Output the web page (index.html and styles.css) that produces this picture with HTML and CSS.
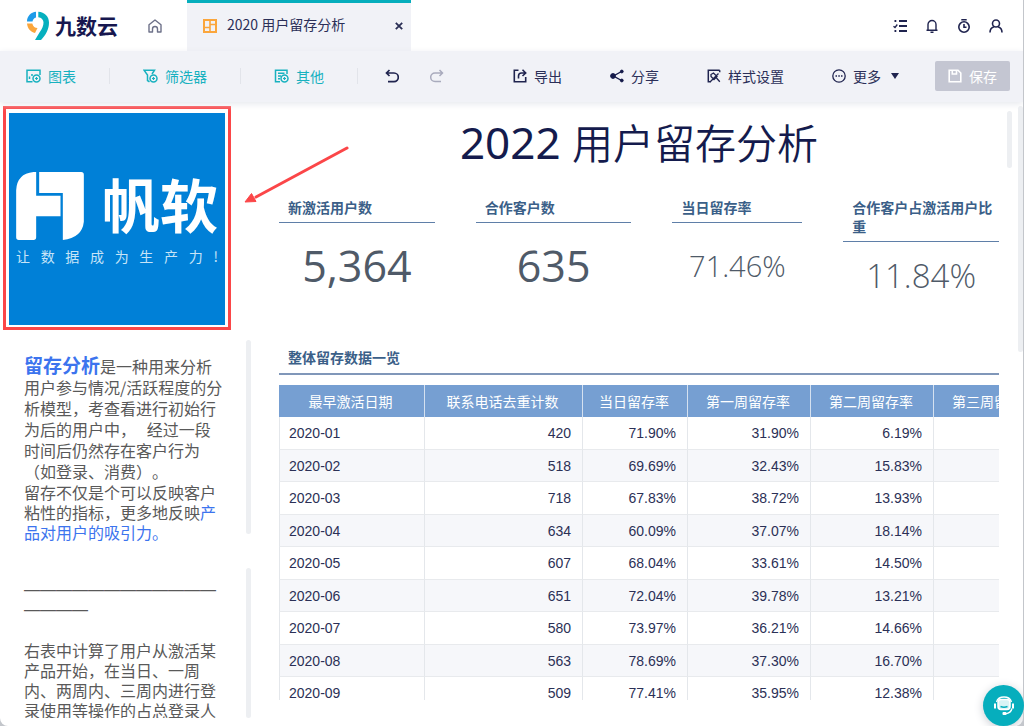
FILE: index.html
```html
<!DOCTYPE html>
<html lang="zh-CN">
<head>
<meta charset="utf-8">
<title>2020 用户留存分析</title>
<link rel="stylesheet" href="styles.css">
</head>
<body>
<div class="app">
  <header class="topbar">
    <a class="brand" href="#">
      <svg width="24" height="30" viewBox="0 0 24 30" fill="none">
        <path d="M1 10.500C1 5 5 1.200 10 .700V6.500C8 7 7 8.500 6.500 10.500Z" fill="#1e9be9"/>
        <path d="M1 12.500H6.300C7 15.500 9 17 11.500 17L9 22C4.500 21 1.500 17.500 1 12.500Z" fill="#fba63c"/>
        <path d="M12.300 .700C18.500 1 23 5.500 23 11.500C23 18 20 24 15 29H9L13.500 21.500C16.300 17.500 17.500 14.500 17.500 11.500C17.500 8.700 15.300 6.700 12.300 6.300Z" fill="#06b0be"/>
      </svg>
      <span class="brand-name">九数云</span>
    </a>
    <a class="home" href="#" aria-label="首页">
      <svg width="14" height="14" viewBox="0 0 14 14" fill="none" stroke="#6d7189" stroke-width="1.400"><path d="M1 5.800 7 1l6 4.800V13H9.500V10a2.500 2.500 0 0 0-5 0v3H1Z" stroke-linejoin="round"/></svg>
    </a>
    <div class="tab">
      <svg width="14" height="14" viewBox="0 0 14 14" fill="none" stroke="#fba63c" stroke-width="2"><rect x="1" y="1" width="12" height="12"/><path d="M7 1v12M1 8.500h6M7 5.500h6" stroke-width="1.600"/></svg>
      <span class="tab-title">2020 用户留存分析</span>
      <button class="tab-close" aria-label="关闭"><svg width="8" height="8" viewBox="0 0 8 8" stroke="#2b2f55" stroke-width="1.800"><path d="M.8.8l6.400 6.400M7.200.8.8 7.200"/></svg></button>
    </div>
    <nav class="tools">
      <button aria-label="任务"><svg width="14" height="14" viewBox="0 0 14 14" fill="none" stroke="#20244f" stroke-width="1.800"><path d="M6 2h8M6 7h8M6 12h8M1.500 2h1.800M1.500 12h1.800"/><path d="M.5 7.200 2 8.500 4.300 5.500" stroke-width="1.300"/></svg></button>
      <button aria-label="通知"><svg width="14" height="14" viewBox="0 0 14 14" fill="none" stroke="#20244f" stroke-width="1.400"><path d="M3 11V5.500a4 4 0 0 1 8 0V11M1.500 11.200h11M5.500 13.300h3"/></svg></button>
      <button aria-label="定时"><svg width="14" height="14" viewBox="0 0 14 14" fill="none" stroke="#20244f" stroke-width="1.600"><circle cx="7" cy="8" r="5.200"/><path d="M4.300 .8h5.400M7 5v3.300h2.500"/></svg></button>
      <button aria-label="账户"><svg width="14" height="14" viewBox="0 0 14 14" fill="none" stroke="#20244f" stroke-width="1.600"><circle cx="7" cy="4.500" r="3.500"/><path d="M1 13.500C1 10.500 2.500 8.500 5 7.700M13 13.500C13 10.500 11.500 8.500 9 7.700"/></svg></button>
    </nav>
  </header>

  <div class="toolbar">
    <div class="group inserts">
      <button class="tool accent"><svg width="15" height="14" viewBox="0 0 15 14" fill="none" stroke="#18b1bf" stroke-width="1.500"><path d="M6.500 12.800H1V1.200h13V6M3.500 10V7.500M6 5v2"/><circle cx="10.500" cy="9.500" r="3.500"/><path d="M10.500 8v3M9 9.500h3" stroke-width="1.200"/></svg>图表</button>
      <i class="sep"></i>
      <button class="tool accent"><svg width="15" height="14" viewBox="0 0 15 14" fill="none" stroke="#18b1bf" stroke-width="1.500"><path d="M6.500 12.800 4.500 11.500V6L1 1.200h10.500L9 5"/><circle cx="10.500" cy="9.500" r="3.500"/><path d="M10.500 8v3M9 9.500h3" stroke-width="1.200"/></svg>筛选器</button>
      <i class="sep"></i>
      <button class="tool accent"><svg width="15" height="14" viewBox="0 0 15 14" fill="none" stroke="#18b1bf" stroke-width="1.500"><path d="M6 12.800H1.500V1.200H13V5M4 4.200h6.500M4 7h3M4 9.800h2"/><circle cx="10.500" cy="9.500" r="3.500"/><path d="M10.500 8v3M9 9.500h3" stroke-width="1.200"/></svg>其他</button>
      <i class="sep"></i>
    </div>
    <div class="group history">
      <button class="tool" aria-label="撤销"><svg width="14" height="14" viewBox="0 0 14 14" fill="none" stroke="#20244f" stroke-width="1.700"><path d="M4.500 1 1.500 4l3 3M1.500 4H9a4.200 4.200 0 0 1 0 8.600H3"/></svg></button>
      <button class="tool" aria-label="重做" disabled><svg width="14" height="14" viewBox="0 0 14 14" fill="none" stroke="#a9abbd" stroke-width="1.500"><path d="M9.500 1l3 3-3 3M12.500 4H5a4.200 4.200 0 0 0 0 8.600h6"/></svg></button>
    </div>
    <div class="group actions">
      <button class="tool"><svg width="14" height="14" viewBox="0 0 14 14" fill="none" stroke="#20244f" stroke-width="1.600"><path d="M5.500 1.300H1.300v11.400h11.400V8"/><path d="M5.500 9.500V7A3 3 0 0 1 8.500 4H12M9.500 .8 12.700 4 9.500 7"/></svg>导出</button>
      <button class="tool"><svg width="14" height="14" viewBox="0 0 14 14" fill="#151a4a" stroke="#151a4a"><path d="M11.500 2.500 3.500 7l8 4.500" fill="none" stroke-width="1.400"/><circle cx="3" cy="7" r="2.400"/><circle cx="11.800" cy="2.500" r="1.400"/><circle cx="11.800" cy="11.500" r="1.400"/></svg>分享</button>
      <button class="tool"><svg width="14" height="14" viewBox="0 0 14 14" fill="none" stroke="#20244f" stroke-width="1.500"><path d="M4 12.700H1.300V1.300h11.400M12.700 1.300v2"/><path d="M4 5.500 6.500 4 10 7.500 7 10.500 4 7.500ZM3.500 12.500 11.500 4.500M9.500 9l3.300 3.800" stroke-width="1.300"/></svg>样式设置</button>
      <button class="tool"><svg width="14" height="14" viewBox="0 0 14 14" fill="none" stroke="#20244f" stroke-width="1.300"><circle cx="7" cy="7" r="6.200"/><path d="M3.500 7H5M6.300 7h1.500M9 7h1.500" stroke-width="1.500"/></svg>更多<svg class="caret" width="8" height="6" viewBox="0 0 8 6"><path d="M0 0h8L4 6Z" fill="#20244f"/></svg></button>
    </div>
    <button class="save"><svg width="14" height="14" viewBox="0 0 14 14" fill="none" stroke="#fff" stroke-width="1.600"><path d="M1.200 1.200H10L12.800 4v8.800H1.200ZM4.300 1.200V5H8.500V1.200"/></svg>保存</button>
  </div>

  <main class="board">
    <aside class="side">
      <figure class="picture">
        <div class="poster">
          <div class="poster-logo">
            <svg width="68" height="68" viewBox="50 217 203 204" fill="#fff"><path d="M110 217V288H183V350H110V413Q110 421 102 421H58Q50 421 50 413V272Q52 222 102 217Z"/><path d="M119 217H245Q253 217 253 225V366Q248 414 190 421V280H119Z"/></svg>
            <span class="poster-name">帆软</span>
          </div>
          <div class="poster-line"><span>让</span><span>数</span><span>据</span><span>成</span><span>为</span><span>生</span><span>产</span><span>力</span><span>!</span></div>
        </div>
      </figure>
      <section class="note note-intro">
        <div class="note-text">
          <p><strong>留存分析</strong>是一种用来分析用户参与情况/活跃程度的分析模型，考查看进行初始行为后的用户中，&nbsp;&nbsp; 经过一段时间后仍然存在客户行为（如登录、消费）。</p>
          <p class="tight">留存不仅是个可以反映客户粘性的指标，更多地反映<em>产品对用户的吸引力。</em></p>
        </div>
        <i class="thumb"></i>
      </section>
      <section class="note note-detail">
        <div class="note-text">
          <p class="tight rule">————————————————</p>
          <p class="tight">右表中计算了用户从激活某产品开始，在当日、一周内、两周内、三周内进行登录使用等操作的占总登录人</p>
        </div>
        <i class="thumb"></i>
      </section>
    </aside>

    <div class="report">
      <h1><span class="year">2022 </span>用户留存分析</h1>
      <div class="kpis">
        <section class="kpi"><h2>新激活用户数</h2><div class="value big">5,364</div></section>
        <section class="kpi"><h2>合作客户数</h2><div class="value big">635</div></section>
        <section class="kpi"><h2>当日留存率</h2><div class="value small">71.46%</div></section>
        <section class="kpi"><h2>合作客户占激活用户比重</h2><div class="value medium">11.84%</div></section>
      </div>
      <h2 class="table-title">整体留存数据一览</h2>
      <div class="table-view">
        <table>
          <colgroup><col class="c-date"><col class="c-count"><col class="c-day"><col class="c-week"><col class="c-week"><col class="c-week"></colgroup>
          <thead><tr><th>最早激活日期</th><th>联系电话去重计数</th><th>当日留存率</th><th>第一周留存率</th><th>第二周留存率</th><th>第三周留存率</th></tr></thead>
          <tbody>
            <tr><td>2020-01</td><td>420</td><td>71.90%</td><td>31.90%</td><td>6.19%</td><td></td></tr>
            <tr><td>2020-02</td><td>518</td><td>69.69%</td><td>32.43%</td><td>15.83%</td><td></td></tr>
            <tr><td>2020-03</td><td>718</td><td>67.83%</td><td>38.72%</td><td>13.93%</td><td></td></tr>
            <tr><td>2020-04</td><td>634</td><td>60.09%</td><td>37.07%</td><td>18.14%</td><td></td></tr>
            <tr><td>2020-05</td><td>607</td><td>68.04%</td><td>33.61%</td><td>14.50%</td><td></td></tr>
            <tr><td>2020-06</td><td>651</td><td>72.04%</td><td>39.78%</td><td>13.21%</td><td></td></tr>
            <tr><td>2020-07</td><td>580</td><td>73.97%</td><td>36.21%</td><td>14.66%</td><td></td></tr>
            <tr><td>2020-08</td><td>563</td><td>78.69%</td><td>37.30%</td><td>16.70%</td><td></td></tr>
            <tr><td>2020-09</td><td>509</td><td>77.41%</td><td>35.95%</td><td>12.38%</td><td></td></tr>
          </tbody>
        </table>
      </div>
    </div>

    <svg class="arrow" width="106" height="62" viewBox="0 0 106 62"><path d="M103 4 12 53" stroke="#fb4648" stroke-width="3" stroke-linecap="round"/><path d="M1 58 7.500 49.500 12 57.500Z" fill="#fb4648" stroke="#fb4648" stroke-linejoin="round"/></svg>
    <i class="thumb title-thumb"></i>
    <i class="thumb board-thumb"></i>
  </main>
</div>
<button class="chat" aria-label="在线客服">
  <svg width="22" height="20" viewBox="0 0 22 20" fill="none" stroke="#fff" stroke-width="1.500"><rect x="5" y="3.500" width="12" height="10" rx="3" fill="#d9f4f6"/><path d="M3.500 6Q5 1 11 1T18.500 6" stroke-width="1.300"/><path d="M2 7.500v5M20 7.500v5" stroke-width="2"/><path d="M19 12.500Q18 17 12.500 17.800" stroke-width="1.300"/><path d="M7.500 10.500Q11 12 14.500 10.500" stroke="#06aebd"/><rect x="9.500" y="16" width="4" height="3" rx="1" fill="#fff" stroke="none"/></svg>
</button>
</body>
</html>
```

FILE: styles.css
```css
* { box-sizing: border-box; }

body {
  margin: 0;
  padding-right: 1px;
  background: #c3c6cb;
  color: #2b2f58;
  font: 14px/20px "Noto Sans CJK SC", sans-serif;
}

h1, h2, p, figure { margin: 0; }
button { padding: 0; border: 0; background: none; color: inherit; font: inherit; cursor: pointer; }
svg { display: block; flex: none; }

.app {
  display: flex;
  flex-direction: column;
  height: 100vh;
  overflow: hidden;
  background: #fff;
  border-radius: 0 0 8px 8px;
}

/* Top bar */
.topbar { display: flex; flex: none; height: 51px; background: #fff; }
.brand { display: flex; align-items: center; gap: 5px; padding-left: 26px; text-decoration: none; }
.brand-name { padding-bottom: 2px; color: #17174f; font-size: 21px; font-weight: 700; }
.home { display: flex; align-items: center; margin: 0 25px 0 30px; }
.tab {
  display: flex;
  align-items: center;
  width: 224px;
  padding: 0 8px 3px 16px;
  border-top: 3px solid #06aebd;
  background: #f1f2f7;
}
.tab-title { flex: 1; margin-left: 10px; padding-bottom: 3px; }
.tab-close { display: flex; }
.tools { display: flex; align-items: center; gap: 18px; margin-left: auto; padding-right: 20px; }

/* Toolbar */
.toolbar {
  position: relative;
  z-index: 1;
  display: flex;
  flex: none;
  align-items: center;
  height: 51px;
  padding: 0 13px 2px 26px;
  background: #f1f2f7;
  box-shadow: 0 2px 7px #e6e8ed;
}
.group { display: flex; align-items: center; }
.inserts { gap: 33px; }
.history { gap: 31px; margin-left: 27px; }
.actions { gap: 48px; margin-left: auto; }
.tool { display: flex; align-items: center; gap: 7px; }
.accent { color: #18b1bf; }
.sep { width: 1px; height: 16px; background: #e2e4ea; }
.caret { margin-left: 3px; }
.save {
  display: flex;
  align-items: center;
  justify-content: center;
  gap: 7px;
  width: 75px;
  height: 30px;
  margin-left: 36px;
  border-radius: 2px;
  background: #c4c6d2;
  color: #fff;
}

/* Board */
.board {
  position: relative;
  display: grid;
  flex: 1;
  grid-template-columns: 254px minmax(0, 1fr);
  min-height: 0;
}
.thumb { flex: none; width: 5px; border-radius: 3px; background: #edeff2; }
.title-thumb { position: absolute; top: 9px; right: 11px; height: 57px; }
.board-thumb { position: absolute; top: 4px; right: 0; height: 246px; }
.arrow { position: absolute; top: 42px; left: 244px; }

/* Side column */
.side { display: flex; flex-direction: column; min-height: 0; padding: 4px 3px 8px; }
.picture { flex: none; width: 228px; padding: 4px 3px 2px; border: 3px solid #fb4648; }
.poster { height: 212px; padding: 59px 7px 0; background: #0080d7; color: #fff; }
.poster-logo { display: flex; justify-content: space-between; height: 68px; }
.poster-name { font-size: 58px; font-weight: 700; line-height: 62px; }
.poster-line { display: flex; justify-content: space-between; padding-top: 6px; color: #c7e4f7; }
.note { display: flex; justify-content: space-between; flex: none; padding-left: 21px; }
.note-intro { height: 202px; margin: 10px 0 26px; padding-bottom: 8px; }
.note-detail { flex: 1; min-height: 0; overflow: hidden; }
.note-text {
  width: 201px;
  padding-top: 14px;
  color: #595959;
  font-size: 16px;
  line-height: 21px;
  text-spacing-trim: space-all;
}
.note-detail .note-text { padding-top: 12px; }
.note-text .tight { line-height: 20px; }
.note-text .rule {
  margin-bottom: 20px;
  font-family: "Liberation Sans", sans-serif;
  line-break: anywhere;
}
.note-text strong { color: #3c74ee; font-size: 19px; }
.note-text em { color: #3c74ee; font-style: normal; }

/* Report */
.report { min-height: 0; padding: 9px 24px 0 25px; overflow: hidden; }
h1 {
  height: 62px;
  color: #141b4d;
  font: 350 41px/60px "Noto Sans CJK SC", sans-serif;
  text-align: center;
}
.year { font-family: "Noto Sans", sans-serif; font-size: 44px; font-weight: 400; line-height: 44px; }
.kpis { display: grid; grid-template-columns: 6fr 6fr 5fr 6fr; gap: 41px; height: 111px; margin-top: 25px; }
.kpi { display: flex; flex-direction: column; }
.kpi h2, .table-title { color: #3b5f88; font-size: 14px; font-weight: 700; line-height: 19px; }
.kpi h2 { padding: 0 0 5px 9px; border-bottom: 1px solid #5f7fa8; }
.value {
  display: flex;
  flex: 1;
  align-items: center;
  justify-content: center;
  color: #4f5a68;
  font-family: "Open Sans", sans-serif;
  line-height: 44px;
}
.big { font-size: 43px; }
.small { font-size: 29px; font-weight: 350; }
.medium { font-size: 33px; font-weight: 350; }
.table-title { margin-top: 39px; padding: 0 0 6px 9px; border-bottom: 2px solid #8097b9; }
.table-view { height: 315px; margin-top: 10px; overflow: hidden; }

table { width: 778px; border-collapse: separate; border-spacing: 0; table-layout: fixed; }
.c-date { width: 146px; }
.c-count { width: 158px; }
.c-day { width: 105px; }
.c-week { width: 123px; }
th, td { padding: 0 10px; border-right: 1px solid #e4e7eb; }
th { height: 32px; padding: 0 2px 0 0; border-right-color: #d5e1f0; background: #769fd2; color: #fff; font-weight: 400; }
td {
  height: 32px;
  padding-right: 11px;
  border-bottom: 1px solid #e8eaed;
  color: #2b3056;
  font-family: "Liberation Sans", sans-serif;
  text-align: right;
}
tr > td:first-child { padding-left: 9px; border-left: 1px solid #e4e7eb; text-align: left; }
tbody tr:nth-child(odd) td { height: 33px; }
tbody tr:nth-child(even) td { background: #f6f7fa; }

/* Chat */
.chat {
  position: fixed;
  right: 0;
  bottom: 0;
  z-index: 2;
  display: flex;
  align-items: center;
  justify-content: center;
  width: 41px;
  height: 41px;
  border-radius: 50%;
  background: #06aebd;
  box-shadow: 0 2px 10px #c9ccd2;
}
```
